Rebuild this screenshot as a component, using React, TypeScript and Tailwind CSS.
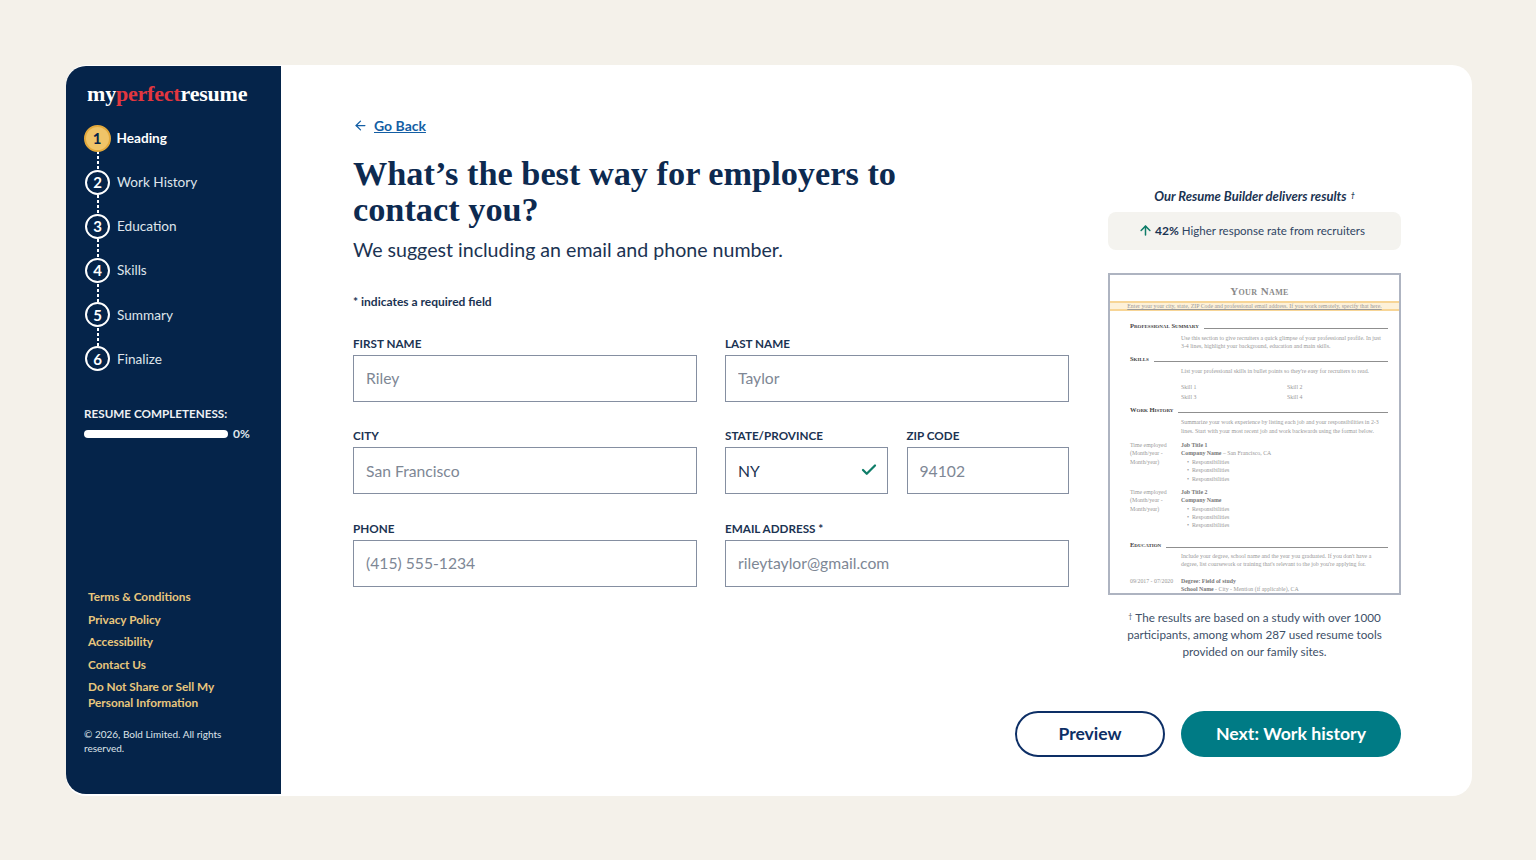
import { ArrowLeft, ArrowUp, Check } from "lucide-react";

const steps = ["Heading", "Work History", "Education", "Skills", "Summary", "Finalize"];
const footerLinks = ["Terms & Conditions", "Privacy Policy", "Accessibility", "Contact Us"];

function Sidebar() {
  return (
    <aside className="w-[215px] mt-px mb-[2px] shrink-0 bg-[#05244a] rounded-l-[20px] flex flex-col pl-[18px] text-white">
      <div className="pt-[13px] pl-[3px] h-[59px] font-['Liberation_Serif',serif] font-bold text-[22px] leading-[30px] tracking-[-0.2px]">
        my<span className="text-[#e2373f]">perfect</span>resume
      </div>

      {/* Steps */}
      <div className="flex flex-col">
        {steps.map((s, i) => (
          <div key={s}>
            <div className="flex items-center h-[26px]">
              {i === 0 ? (
                <div className="w-[27px] h-[27px] -ml-[0.5px] rounded-full bg-[#efc468] border-2 border-[#e3a93c] flex items-center justify-center text-[15px] font-bold text-[#05244a] shrink-0">
                  1
                </div>
              ) : (
                <div className="w-[25px] h-[25px] ml-[1px] mr-[1px] rounded-full border-2 border-white flex items-center justify-center text-[15px] font-bold shrink-0">
                  {i + 1}
                </div>
              )}
              <span className={"ml-[6px] text-[13.6px] " + (i === 0 ? "font-bold" : "text-[#dfe4ea]")}>{s}</span>
            </div>
            {i < 5 && (
              <div className="h-[18.2px] w-[2px] ml-[12.5px] bg-[repeating-linear-gradient(to_bottom,#ffffff_0px,#ffffff_3px,transparent_3px,transparent_5px)]" />
            )}
          </div>
        ))}
      </div>

      {/* Completeness */}
      <div className="mt-[33px] text-[11.7px] font-bold leading-[16px] text-[#eef0f3]">RESUME COMPLETENESS:</div>
      <div className="mt-[4px] flex items-center">
        <div className="w-[144px] h-[8px] rounded-full bg-white" />
        <span className="ml-[5px] text-[12px] font-bold text-[#dfe4ea]">0%</span>
      </div>

      {/* Footer */}
      <div className="mt-auto pl-[4px] flex flex-col gap-[7px] text-[11.8px] leading-[15.5px] font-bold text-[#e9c77d]">
        {footerLinks.map((l) => (
          <span key={l}>{l}</span>
        ))}
        <span>
          Do Not Share or Sell My
          <br />
          Personal Information
        </span>
      </div>
      <p className="mt-[18px] mb-[39px] w-[160px] text-[10px] leading-[13.5px] text-[#dfe4ea]">
        © 2026, Bold Limited. All rights reserved.
      </p>
    </aside>
  );
}

function Field({
  label,
  placeholder,
  value,
  className,
}: {
  label: string;
  placeholder?: string;
  value?: string;
  className?: string;
}) {
  return (
    <div className={className}>
      <div className="text-[11.7px] font-bold leading-[16px] text-[#1b3352] h-[16px]">{label}</div>
      <div className="relative mt-[4px]">
        <input
          readOnly
          placeholder={placeholder}
          defaultValue={value}
          className="w-full h-[47px] border border-[#858fa1] px-[12px] text-[15.7px] text-[#1b3352] placeholder:text-[#7e8795] font-['Lato',sans-serif] outline-none"
        />
        {value && <Check className="absolute right-[10px] top-[14px] w-[18px] h-[18px] text-[#0f7d69]" strokeWidth={3} />}
      </div>
    </div>
  );
}

function Sec({ title }: { title: string }) {
  return (
    <div className="flex items-end h-[8px] text-[#444]">
      <span className="text-[6.5px] leading-[7px] font-bold [font-variant:small-caps] whitespace-nowrap">{title}</span>
      <div className="flex-1 ml-[5px] h-px bg-[#8f8f8f]" />
    </div>
  );
}

function Line({ children, left }: { children: React.ReactNode; left?: string }) {
  return (
    <div className="flex h-[8.4px] leading-[8.4px]">
      <div className="w-[51px] shrink-0 whitespace-nowrap">{left}</div>
      <div className="flex-1 whitespace-nowrap">{children}</div>
    </div>
  );
}

function Job({ title, company }: { title: string; company: React.ReactNode }) {
  return (
    <div>
      <Line left="Time employed"><b className="text-[#777]">{title}</b></Line>
      <Line left="(Month/year -">{company}</Line>
      <Line left="Month/year)"><span className="pl-[6px]">•&nbsp; Responsibilities</span></Line>
      <Line><span className="pl-[6px]">•&nbsp; Responsibilities</span></Line>
      <Line><span className="pl-[6px]">•&nbsp; Responsibilities</span></Line>
    </div>
  );
}

function ResumePreview() {
  return (
    <div className="h-[322px] border-2 border-[#aeb4c1] overflow-hidden font-['Liberation_Serif',serif] text-[#999] text-[5.85px]">
      <div className="pt-[9px] pl-[10px] h-[26px] text-center text-[11px] leading-[14px] font-bold text-[#8a8a8a] [font-variant:small-caps] tracking-[0.4px]">
        Your Name
      </div>
      <div className="h-[10px] bg-[#fdf1d9] border-y-2 border-[#f7d596] text-center text-[5.85px] leading-[6px] whitespace-nowrap underline">
        Enter your your city, state, ZIP Code and professional email address. If you work remotely, specify that here.
      </div>
      <div className="pl-[20px] pr-[11px] pt-[10px]">
        <Sec title="Professional Summary" />
        <div className="mt-[5px]">
          <Line>Use this section to give recruiters a quick glimpse of your professional profile. In just</Line>
          <Line>3-4 lines, highlight your background, education and main skills.</Line>
        </div>
        <div className="mt-[3px]"><Sec title="Skills" /></div>
        <div className="mt-[5px]">
          <Line>List your professional skills in bullet points so they're easy for recruiters to read.</Line>
        </div>
        <div className="mt-[7px] flex pl-[51px]">
          <div className="w-[106px] leading-[10px]">Skill 1<br />Skill 3</div>
          <div className="leading-[10px]">Skill 2<br />Skill 4</div>
        </div>
        <div className="mt-[3px]"><Sec title="Work History" /></div>
        <div className="mt-[5px]">
          <Line>Summarize your work experience by listing each job and your responsibilities in 2-3</Line>
          <Line>lines. Start with your most recent job and work backwards using the format below.</Line>
        </div>
        <div className="mt-[6px]">
          <Job title="Job Title 1" company={<><b className="text-[#777]">Company Name</b> – San Francisco, CA</>} />
        </div>
        <div className="mt-[5px]">
          <Job title="Job Title 2" company={<b className="text-[#777]">Company Name</b>} />
        </div>
        <div className="mt-[10px]"><Sec title="Education" /></div>
        <div className="mt-[4px]">
          <Line>Include your degree, school name and the year you graduated. If you don't have a</Line>
          <Line>degree, list coursework or training that's relevant to the job you're applying for.</Line>
        </div>
        <div className="mt-[8px]">
          <Line left="09/2017 - 07/2020"><b className="text-[#777]">Degree: Field of study</b></Line>
          <Line><b className="text-[#777]">School Name</b> - City - Mention (if applicable), CA</Line>
        </div>
      </div>
    </div>
  );
}

export default function App() {
  return (
    <div className="min-h-screen h-[860px] bg-[#f4f1ea] pt-[65px] pl-[66px] font-['Lato',sans-serif] overflow-hidden">
      <div className="w-[1406px] h-[731px] bg-white rounded-[20px] flex">
        <Sidebar />

        <main className="flex-1 pl-[72px] pr-[71px] flex flex-col">
          <div className="flex flex-1">
            {/* Form */}
            <div className="w-[716px]">
              <div className="mt-[50px] flex items-center h-[20px] text-[#135ea4]">
                <ArrowLeft className="w-[15px] h-[15px]" strokeWidth={2} />
                <a className="ml-[6px] text-[14px] font-bold underline text-[#135ea4]">Go Back</a>
              </div>
              <h1 className="mt-[20px] w-[600px] text-[34.3px] leading-[36px] font-bold text-[#0d2a50] font-['Liberation_Serif',serif]">
                What’s the best way for employers to contact you?
              </h1>
              <p className="mt-[10px] text-[19.6px] leading-[26px] text-[#1b3352]">We suggest including an email and phone number.</p>
              <p className="mt-[31px] text-[12px] leading-[16px] font-bold text-[#1b3352]">* indicates a required field</p>

              <div className="mt-[24.5px] flex flex-col gap-[25.5px]">
                <div className="grid grid-cols-2 gap-[28px]">
                  <Field label="FIRST NAME" placeholder="Riley" />
                  <Field label="LAST NAME" placeholder="Taylor" />
                </div>
                <div className="grid grid-cols-2 gap-[28px]">
                  <Field label="CITY" placeholder="San Francisco" />
                  <div className="flex gap-[19px]">
                    <Field className="flex-1" label="STATE/PROVINCE" value="NY" />
                    <Field className="flex-1" label="ZIP CODE" placeholder="94102" />
                  </div>
                </div>
                <div className="grid grid-cols-2 gap-[28px]">
                  <Field label="PHONE" placeholder="(415) 555-1234" />
                  <Field label="EMAIL ADDRESS *" placeholder="rileytaylor@gmail.com" />
                </div>
              </div>
            </div>

            {/* Right rail */}
            <div className="ml-[39px] w-[293px] pt-[122px]">
              <div className="text-center text-[13px] leading-[18px] font-bold italic text-[#1b3352]">
                Our Resume Builder delivers results<sup className="ml-[4px] text-[7px] leading-none">†</sup>
              </div>
              <div className="mt-[7px] h-[38px] pb-[1px] pr-[6px] rounded-[8px] bg-[#f4f3ef] flex items-center justify-center text-[11.5px] text-[#2f4563]">
                <ArrowUp className="w-[15px] h-[15px] text-[#0f7d69] mr-[2px]" strokeWidth={2.4} />
                <b className="text-[12px] text-[#1b3352] mr-[3px]">42%</b> Higher response rate from recruiters
              </div>
              <div className="mt-[23px]">
                <ResumePreview />
              </div>
              <p className="mt-[14px] text-center text-[11.7px] leading-[17px] text-[#3d4f68]">
                <sup className="mr-[3px] text-[7px] leading-none">†</sup>The results are based on a study with over 1000 participants, among whom 287 used resume tools provided on our family sites.
              </p>
            </div>
          </div>

          {/* Actions */}
          <div className="flex justify-end gap-[16px] mb-[39px]">
            <button className="w-[150px] h-[46px] rounded-full border-2 border-[#0d2f66] text-[17.5px] font-bold text-[#0d2f66]">Preview</button>
            <button className="w-[220px] h-[46px] rounded-full bg-[#007b85] text-[17.7px] font-bold text-white">Next: Work history</button>
          </div>
        </main>
      </div>
    </div>
  );
}
